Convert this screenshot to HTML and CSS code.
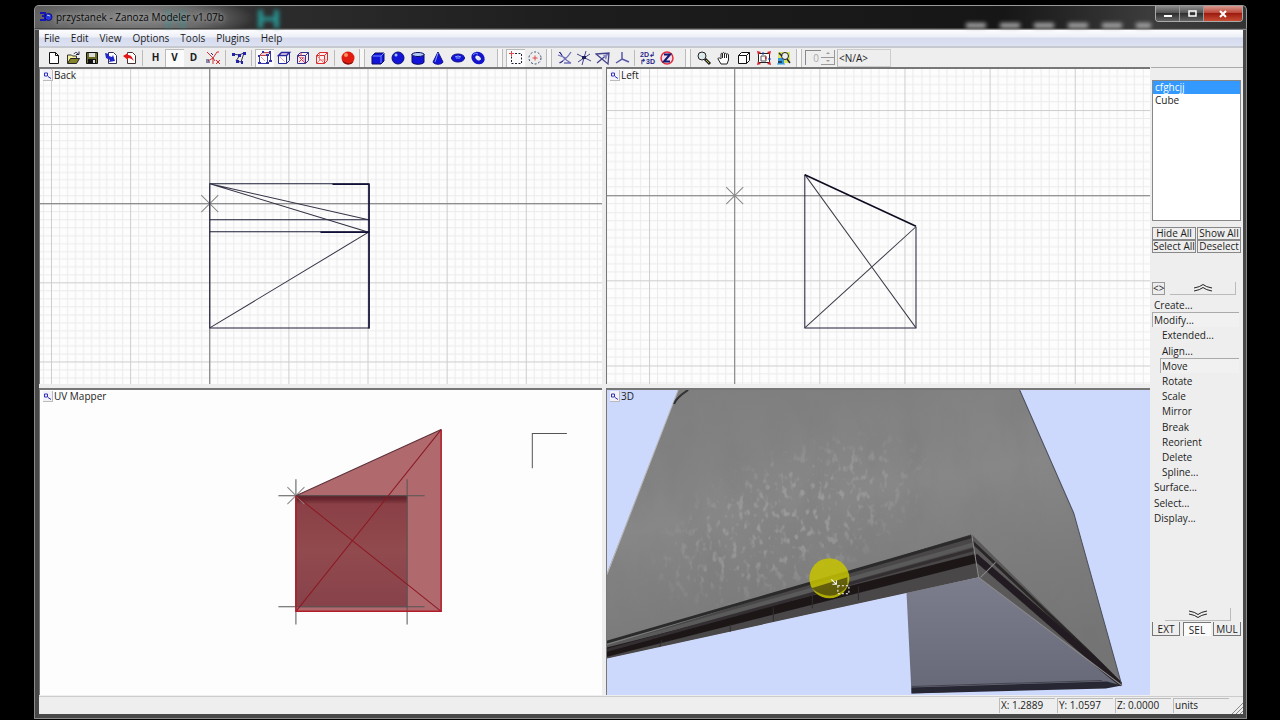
FILE: index.html
```html
<!DOCTYPE html>
<html lang="en">
<head>
<meta charset="utf-8">
<title>przystanek - Zanoza Modeler v1.07b</title>
<link rel="stylesheet" href="styles.css">
</head>
<body>
<svg class="defs" width="0" height="0" aria-hidden="true">
  <symbol id="new" viewBox="0 0 16 16"><path d="M3.500 2.500h6l3 3v8h-9z" fill="#fff" stroke="#111"/><path d="M9.500 2.500v3h3" fill="none" stroke="#111"/></symbol>
  <symbol id="open" viewBox="0 0 16 16"><path d="M2.500 13V5h4l1 1h4v3" fill="#f4ef9c" stroke="#333"/><path d="M2.500 13.500l3-5h9l-3 5z" fill="#84822a" stroke="#222"/><path d="M9 4c1-2 3-2 4 0M11 4.500h3V1.500" fill="none" stroke="#224"/></symbol>
  <symbol id="save" viewBox="0 0 16 16"><path d="M2.500 2.500h11v11h-11z" fill="#6c6c26" stroke="#111"/><path d="M5 3h6v4H5z" fill="#ddd"/><path d="M4 9h8v5H4z" fill="#111"/><path d="M9 10h2v3H9z" fill="#ddd"/></symbol>
  <symbol id="import" viewBox="0 0 16 16"><path d="M5.500 2.500h5l3 3v8h-8z" fill="#fff" stroke="#335"/><path d="M2 3l4 1v2l3 1 1-2 2 6-6 1 1-2-4-2z" fill="#2026c8"/></symbol>
  <symbol id="export" viewBox="0 0 16 16"><path d="M5.500 2.500h5l3 3v8h-8z" fill="#fff" stroke="#433"/><path d="M1 6l5-3v2c3 0 4 2 6 6-2-2-4-3-6-3v2z" fill="#e01818"/></symbol>
  <symbol id="axes" viewBox="0 0 16 16"><path d="M2 2l6 6 4-6M8 8v6M3 11l5-3 2 3" fill="none" stroke="#c33"/><path d="M2 2l2 2M12 2h2M11 10l4 4M15 10l-4 4" stroke="#e22"/><path d="M1 10h3M1 12h4M6 3l2 2" stroke="#226"/></symbol>
  <symbol id="poly" viewBox="0 0 16 16"><path d="M2 4l6 1 5-2-3 9-5-1 4-6" fill="none" stroke="#334"/><path d="M1 3h3v3H1zM7 4h3v3H7zM12 2h3v3h-3zM5 10h3v3H5zM10 11h2v3h-2z" fill="#2222b0"/></symbol>
  <symbol id="cube-v" viewBox="0 0 16 16"><path d="M2.500 5.500h8v8h-8z" fill="#fff" stroke="#3838a8"/><path d="M2.500 5.500l3-3h8l-3 3z" fill="#f4d0d0" stroke="#c04848"/><path d="M13.500 2.500v8l-3 3" fill="none" stroke="#3838a8"/><path d="M4 7l4 4" stroke="#d8a0a8"/><path d="M1 5h2v2H1zM9 4h3v2H9zM12 1h2v3h-2zM5 1h2v2H5zM9 12h3v2H9zM1 12h3v2H1zM12 10h3v2h-3z" fill="#3030a8"/></symbol>
  <symbol id="cube-e" viewBox="0 0 16 16"><path d="M2.500 5.500h8v8h-8z" fill="#fff" stroke="#2828a0"/><path d="M13.500 2.500v8l-3 3" fill="none" stroke="#2828a0"/><path d="M2.500 5.500l3-3h8l-3 3z" fill="#f6dce4" stroke="#2828a0" stroke-width="1.500"/><path d="M4 7l5 5" fill="none" stroke="#e6a0a8"/></symbol>
  <symbol id="cube-f" viewBox="0 0 16 16"><path d="M2.500 5.500h8v8h-8zM2.500 5.500l3-3h8l-3 3M13.500 2.500v8l-3 3" fill="#fbe8ee" stroke="#303090"/><path d="M3 6l7 7M9 7l-5 5M6 3v3" fill="none" stroke="#d03c4c"/><path d="M4 7.500h5v4.500" fill="none" stroke="#e08090"/></symbol>
  <symbol id="cube-o" viewBox="0 0 16 16"><path d="M2.500 5.500h8v8h-8zM2.500 5.500l3-3h8l-3 3M13.500 2.500v8l-3 3" fill="#fff0ee" stroke="#d83030"/><path d="M3 6l7 7M5.500 3v7h7M3 13l3-3" fill="none" stroke="#e88080"/></symbol>
  <symbol id="ball" viewBox="0 0 16 16"><circle cx="8" cy="8" r="6.500" fill="#e01c10"/><path d="M2 10a6.500 6.500 0 0 0 12 1c-3 3-8 3-12-1" fill="#801008"/><circle cx="6" cy="5" r="2" fill="#ff9060"/></symbol>
  <symbol id="box" viewBox="0 0 16 16"><path d="M2 6l3-3h9v8l-3 3H2z" fill="#1414d8" stroke="#0c0c60"/><path d="M2.500 6h8.500l3-3M11 6v7" fill="none" stroke="#7090ff"/></symbol>
  <symbol id="sphere" viewBox="0 0 16 16"><circle cx="8" cy="8" r="6" fill="#1414d8" stroke="#0c0c70"/><circle cx="6" cy="5" r="1.500" fill="#9fc0ff"/></symbol>
  <symbol id="cyl" viewBox="0 0 16 16"><path d="M2 4v8c0 3 12 3 12 0V4z" fill="#1414d8" stroke="#0c0c60"/><ellipse cx="8" cy="4.500" rx="6" ry="2" fill="#b4ccf4" stroke="#0c0c60"/></symbol>
  <symbol id="cone" viewBox="0 0 16 16"><path d="M8 2l5 10c-1 3-9 3-10 0z" fill="#1414d8" stroke="#14148a"/><path d="M8 3l-3 9" stroke="#7898ff"/></symbol>
  <symbol id="torus" viewBox="0 0 16 16"><ellipse cx="8" cy="8" rx="6.500" ry="4" fill="#1414d8" stroke="#0c0c80"/><path d="M5 7q3-2 6 0M6 8h4" fill="none" stroke="#8aa8ff"/></symbol>
  <symbol id="ring" viewBox="0 0 16 16"><ellipse cx="8" cy="8" rx="5" ry="4" transform="rotate(35 8 8)" fill="none" stroke="#1414c8" stroke-width="4"/><ellipse cx="9" cy="9" rx="2" ry="1" fill="#dce4ff"/><path d="M3 5q2-3 5-1" fill="none" stroke="#7090ff"/></symbol>
  <symbol id="selrect" viewBox="0 0 16 16"><path d="M3.500 3.500h10v10h-10z" fill="none" stroke="#223" stroke-dasharray="2 1.500"/><path d="M1 3.500h5M3.500 1v5" stroke="#e04848"/></symbol>
  <symbol id="selcirc" viewBox="0 0 16 16"><circle cx="8" cy="8" r="6" fill="none" stroke="#346" stroke-dasharray="2 1.800"/><path d="M5.500 8h5M8 5.500v5" stroke="#e04848"/></symbol>
  <symbol id="snap1" viewBox="0 0 16 16"><path d="M3 2q3 7 11 11M14 2Q9 10 2 13M1 5l8 3M7 13h7" fill="none" stroke="#7070b8" stroke-width="1.300"/><path d="M2 2l3 3M3 13l3-2" stroke="#222270"/></symbol>
  <symbol id="snap2" viewBox="0 0 16 16"><path d="M1 4l14 7M10 1L6 15M14 4L2 12" fill="none" stroke="#44448c"/><path d="M6 6h4v3H6z" fill="#1d1d58"/></symbol>
  <symbol id="snap3" viewBox="0 0 16 16"><path d="M1 4l13-1-1 11zM2 13L14 3" fill="none" stroke="#44448c" stroke-width="1.300"/><path d="M8 5l3 5 2-6z" fill="#8888c8"/></symbol>
  <symbol id="snap4" viewBox="0 0 16 16"><path d="M8 2v7L2 13M8 9l7 3" fill="none" stroke="#5858a8" stroke-width="1.500"/></symbol>
  <symbol id="zcirc" viewBox="0 0 16 16"><circle cx="8" cy="8" r="6" fill="#f2dceb" stroke="#e42c3c" stroke-width="1.500"/><path d="M5 4.500h6l-6 7h6" fill="none" stroke="#111870" stroke-width="2"/></symbol>
  <symbol id="lens" viewBox="0 0 16 16"><circle cx="6" cy="6" r="4" fill="#dce9e9" stroke="#222"/><path d="M9 9l5 5" stroke="#222" stroke-width="3"/><path d="M10 10l3 3" stroke="#b8b030"/></symbol>
  <symbol id="hand" viewBox="0 0 16 16"><path d="M5 14l-3-5c0-2 2-1 3 0V4c0-1 1.500-1 1.500 0 0-2 2-2 2 0 0-1 2-1 2 .500 0-1 2-1 2 .500v5L11 14z" fill="#fff" stroke="#222"/><path d="M6.500 4v4M8.500 4v4M10.500 4.500V8" stroke="#222"/></symbol>
  <symbol id="cube" viewBox="0 0 16 16"><path d="M2.500 5.500l3-3h8v8l-3 3h-8zM2.500 5.500h8v8M10.500 5.500l3-3" fill="#fff" stroke="#111"/></symbol>
  <symbol id="fit" viewBox="0 0 16 16"><path d="M2.500 3.500h11v9h-11z" fill="#fff" stroke="#222"/><path d="M5 6h5v5H5z" fill="none" stroke="#555"/><path d="M1 1l4 1-3 3zM15 1l-4 1 3 3zM1 15l4-1-3-3zM15 15l-4-1 3-3zM9 6l2 2-2 2z" fill="#d8202c"/><path d="M7 2v3M12 9h3" stroke="#2040c0"/></symbol>
  <symbol id="fitsel" viewBox="0 0 16 16"><path d="M2 2h12v11H2z" fill="#d8e464"/><path d="M2 8h6v6H2z" fill="#3398d8"/><circle cx="9" cy="6" r="3.500" fill="#eee" stroke="#222"/><path d="M11 9l3 4M3 3l3 3M2 12h4" stroke="#223" stroke-width="1.500"/><path d="M1 14h8" stroke="#3298e0"/></symbol>
  <symbol id="mini" viewBox="0 0 9 9"><path d="M1.500 2.500h3v3h-3zM5 6l3 2" fill="none" stroke="#3030b8"/></symbol>
  <symbol id="up" viewBox="0 0 20 8"><path d="M1 4q6-1 9-3.500Q13 3 19 4M1 7q6-1 9-3.500Q13 6 19 7" fill="none" stroke="#222"/></symbol>
</svg>

<div class="window">
  <header class="title">
    <svg class="ghosts" viewBox="0 0 160 22" aria-hidden="true"><path d="M3 2h5v7h9V2h5v18h-5v-7H8v7H3z" fill="#3a8a88" opacity=".6" transform="translate(1 0)"/><path d="M96 2h5v7h11V2h5v18h-5v-7h-11v7h-5z" fill="#2a9090"/></svg>
    <svg class="appicon" viewBox="0 0 14 12" aria-hidden="true"><path d="M1 2h5v3H3h3v4H1" fill="none" stroke="#1616b8" stroke-width="2"/><circle cx="9.500" cy="6" r="3.500" fill="#2638dc" stroke="#0c0c80"/><path d="M8 4l3 1" stroke="#bcd"/></svg>
    <h1>przystanek - Zanoza Modeler v1.07b</h1>
    <i class="smudges"></i>
    <div class="caption">
      <button aria-label="Minimize"><svg viewBox="0 0 12 10"><path d="M2 6h8v2H2z" fill="#fff"/></svg></button>
      <button aria-label="Maximize"><svg viewBox="0 0 12 10"><path d="M3 2h7v5H3z" fill="none" stroke="#fff" stroke-width="1.500"/></svg></button>
      <button class="close" aria-label="Close"><svg viewBox="0 0 12 10"><path d="M3 2l6 6M9 2L3 8" stroke="#fff" stroke-width="2"/></svg></button>
    </div>
  </header>

  <div class="client">
    <nav class="menu">
      <button>File</button><button>Edit</button><button>View</button><button>Options</button><button>Tools</button><button>Plugins</button><button>Help</button>
    </nav>

    <div class="toolbar" role="toolbar">
      <div class="group"><button aria-label="New"><svg><use href="#new"/></svg></button><button aria-label="Open"><svg><use href="#open"/></svg></button><button aria-label="Save"><svg><use href="#save"/></svg></button><button aria-label="Import"><svg><use href="#import"/></svg></button><button aria-label="Export"><svg><use href="#export"/></svg></button></div>
      <i class="sep"></i>
      <div class="group letters"><button>H</button><button class="on">V</button><button>D</button><button aria-label="Axes"><svg><use href="#axes"/></svg></button></div>
      <i class="sep"></i>
      <div class="group"><button aria-label="Polygon"><svg><use href="#poly"/></svg></button></div>
      <i class="sep"></i>
      <div class="group"><button class="on" aria-label="Vertices"><svg><use href="#cube-v"/></svg></button><button aria-label="Edges"><svg><use href="#cube-e"/></svg></button><button aria-label="Faces"><svg><use href="#cube-f"/></svg></button><button aria-label="Objects"><svg><use href="#cube-o"/></svg></button></div>
      <i class="sep"></i>
      <div class="group"><button aria-label="Materials"><svg><use href="#ball"/></svg></button></div>
      <i class="grip"></i>
      <div class="group wide"><button aria-label="Box"><svg><use href="#box"/></svg></button><button aria-label="Sphere"><svg><use href="#sphere"/></svg></button><button aria-label="Cylinder"><svg><use href="#cyl"/></svg></button><button aria-label="Cone"><svg><use href="#cone"/></svg></button><button aria-label="Torus"><svg><use href="#torus"/></svg></button><button aria-label="Ring"><svg><use href="#ring"/></svg></button></div>
      <i class="grip far"></i>
      <div class="group"><button class="on" aria-label="Rectangle select"><svg><use href="#selrect"/></svg></button><button aria-label="Circle select"><svg><use href="#selcirc"/></svg></button></div>
      <i class="grip"></i>
      <div class="group"><button aria-label="Snap to grid"><svg><use href="#snap1"/></svg></button><button aria-label="Snap to vertex"><svg><use href="#snap2"/></svg></button><button aria-label="Snap to face"><svg><use href="#snap3"/></svg></button><button aria-label="Snap to axis"><svg><use href="#snap4"/></svg></button></div>
      <i class="sep"></i>
      <div class="group"><button class="dims"><span>2D&#8626;</span><span>&#8625;3D</span></button><button aria-label="Z-buffer"><svg><use href="#zcirc"/></svg></button></div>
      <i class="grip far"></i>
      <div class="group wide"><button aria-label="Zoom"><svg><use href="#lens"/></svg></button><button aria-label="Pan"><svg><use href="#hand"/></svg></button><button aria-label="Perspective"><svg><use href="#cube"/></svg></button><button aria-label="Fit all"><svg><use href="#fit"/></svg></button><button aria-label="Fit selected"><svg><use href="#fitsel"/></svg></button></div>
      <i class="grip"></i>
      <div class="spin"><input type="text" value="0" aria-label="Index" disabled><div><button aria-label="Increase"><svg viewBox="0 0 8 4"><path d="M2 3l2-2 2 2z" fill="#999"/></svg></button><button aria-label="Decrease"><svg viewBox="0 0 8 4"><path d="M2 1l2 2 2-2z" fill="#999"/></svg></button></div></div>
      <output class="na">&lt;N/A&gt;</output>
    </div>

    <div class="work">
      <main class="views">
        <section class="view">
          <h2><svg><use href="#mini"/></svg>Back</h2>
          <svg class="scene" viewBox="40 69 562 314" preserveAspectRatio="xMinYMin slice">
            <defs><pattern id="g1" x="209" y="203" width="79" height="79" patternUnits="userSpaceOnUse"><path d="M8.500 0v79M16.500 0v79M24.500 0v79M32.500 0v79M40.500 0v79M48.500 0v79M55.500 0v79M63.500 0v79M71.500 0v79M0 8.500h79M0 16.500h79M0 24.500h79M0 32.500h79M0 40.500h79M0 48.500h79M0 55.500h79M0 63.500h79M0 71.500h79" stroke="#ebebeb"/><path d="M.500 0v79M0 .500h79" stroke="#cdcdcd"/></pattern></defs>
            <path d="M40 69h562v318H40z" fill="url(#g1)"/>
            <path d="M40 203.500h562M209.500 69v318" stroke="#777"/>
            <path d="M201 195l17 17M218 195l-17 17" stroke="#888"/>
            <g fill="none" stroke="#1c1c38"><path d="M209.500 183.500h159v144h-159zM209.500 219.500h159M209.500 231.500h159"/><path d="M209.500 183.500L368 219.500M209.500 183.500L368 232L209.500 327.500" stroke="#333346"/><path d="M332 184h37M368.500 184v144M320 232h49" stroke="#101038" stroke-width="1.500"/></g>
          </svg>
        </section>
        <section class="view">
          <h2><svg><use href="#mini"/></svg>Left</h2>
          <svg class="scene" viewBox="607 69 543 314" preserveAspectRatio="xMinYMin slice">
            <defs><pattern id="g2" x="734" y="195" width="85" height="85" patternUnits="userSpaceOnUse"><path d="M8.500 0v85M17.500 0v85M25.500 0v85M34.500 0v85M42.500 0v85M51.500 0v85M59.500 0v85M68.500 0v85M76.500 0v85M0 8.500h85M0 17.500h85M0 25.500h85M0 34.500h85M0 42.500h85M0 51.500h85M0 59.500h85M0 68.500h85M0 76.500h85" stroke="#ebebeb"/><path d="M.500 0v85M0 .500h85" stroke="#cdcdcd"/></pattern></defs>
            <path d="M607 69h543v318H607z" fill="url(#g2)"/>
            <path d="M607 195.500h543M734.500 69v318" stroke="#808080"/>
            <path d="M726 187l17 17M743 187l-17 17" stroke="#888"/>
            <g fill="none" stroke="#1c1c38"><path d="M804.500 174.500v153h111v-101"/><path d="M804.500 174.500l111 153M804.500 327.500l111-101" stroke="#3c3c48"/><path d="M804.500 174.500l111 51.500" stroke="#0c0c20" stroke-width="1.600"/></g>
          </svg>
        </section>
        <section class="view">
          <h2><svg><use href="#mini"/></svg>UV Mapper</h2>
          <svg class="scene" viewBox="40 390 562 305" preserveAspectRatio="xMinYMin slice">
            <defs><linearGradient id="uv" x1="0" y1="0" x2="0" y2="1"><stop offset="0" stop-color="#5c1c24"/><stop offset=".04" stop-color="#6c2830"/><stop offset=".08" stop-color="#8a4046"/><stop offset=".5" stop-color="#914a4e"/><stop offset="1" stop-color="#87424a"/></linearGradient></defs>
            <path d="M295.500 495.500L440.500 429.500v181.500h-145z" fill="#b06a6e"/>
            <path d="M295 495h112v112H295z" fill="url(#uv)"/>
            <path d="M278 495.500h146M278 606.500h146M295.500 479v145M406.500 479v145M531.500 468v-34.500H566" fill="none" stroke="#555"/>
            <path d="M287 487l17 17M304 487l-17 17" stroke="#8a8a8a"/>
            <path d="M440.500 429.500L295.500 611M295.500 495.500L440.500 611" stroke="#8c1822"/>
            <path d="M295.500 495.500v115.500h145V429.500" fill="none" stroke="#b01c28" stroke-width="1.500"/>
            <path d="M295.500 495.500l145-66" stroke="#5c3038"/>
          </svg>
        </section>
        <section class="view sky">
          <h2><svg><use href="#mini"/></svg>3D</h2>
          <svg class="scene" viewBox="607 390 543 305" preserveAspectRatio="xMinYMin slice">
            <defs>
              <linearGradient id="wall" x1="0" y1="0" x2=".3" y2="1"><stop offset="0" stop-color="#7e7e7e"/><stop offset=".45" stop-color="#878787"/><stop offset=".75" stop-color="#7c7c7c"/><stop offset="1" stop-color="#747474"/></linearGradient>
              <linearGradient id="back" x1="0" y1="0" x2="0" y2="1"><stop offset="0" stop-color="#7c7e8e"/><stop offset="1" stop-color="#666877"/></linearGradient>
              <radialGradient id="fade"><stop offset="0" stop-color="#fff"/><stop offset=".6" stop-color="#aaa"/><stop offset="1" stop-color="#000"/></radialGradient>
              <mask id="patch"><ellipse cx="790" cy="520" rx="160" ry="75" transform="rotate(-25 790 520)" fill="url(#fade)"/></mask>
              <filter id="grain" x="0" y="0" width="100%" height="100%"><feTurbulence type="fractalNoise" baseFrequency=".03 .014" numOctaves="4" seed="7"/><feColorMatrix values="0 0 0 0 .2  0 0 0 0 .2  0 0 0 0 .2  2.500 0 0 0 -1"/><feComposite in2="SourceGraphic" operator="in"/></filter>
              <filter id="chips" x="0" y="0" width="100%" height="100%"><feTurbulence type="fractalNoise" baseFrequency=".16 .11" numOctaves="2" seed="3"/><feColorMatrix values="0 0 0 0 .66  0 0 0 0 .66  0 0 0 0 .66  5 0 0 0 -2.700"/><feComposite in2="SourceGraphic" operator="in"/></filter>
              <filter id="soft"><feGaussianBlur stdDeviation=".7"/></filter>
              <clipPath id="under"><path d="M607 636L971 532L978 577L607 658z"/></clipPath>
              <clipPath id="side"><path d="M971 532L1121 682V687L978 577z"/></clipPath>
            </defs>
            <path d="M906 592l72-15 143 108-210 8z" fill="url(#back)"/>
            <path d="M911 687l195-6 15 4-16 3-194 5z" fill="#272733"/>
            <path d="M911 686l190-6" stroke="#44444f"/>
            <path d="M678 390h341l47 107 7 16 48 172-143-108-371 81v-85z" fill="url(#wall)"/>
            <path d="M678 390h341l47 107 7 16 48 172-143-108-371 81v-85z" filter="url(#grain)" opacity=".4"/>
            <g mask="url(#patch)"><path d="M678 390h293v144l-364 106v-66z" filter="url(#chips)" opacity=".3"/></g>
            <g clip-path="url(#under)"><path d="M607 645L971 534l7 43-371 81z" fill="#494748"/><g fill="none" filter="url(#soft)"><path d="M606 642L972 536" stroke="#2c2a2b" stroke-width="3"/><path d="M606 647L974 544" stroke="#5a5a5a" stroke-width="4"/><path d="M606 652L976 558" stroke="#1c1819" stroke-width="9"/><path d="M606 650L974 549" stroke="#332e30" stroke-width="3"/></g><path d="M662 640l-4 10M730 624v13M773 607v14M812 592v16M858 586v14" stroke="#302d30"/></g>
            <g clip-path="url(#side)"><path d="M971 534l150 148v3L978 577z" fill="#5a5858"/><g fill="none" filter="url(#soft)"><path d="M972 542L1121 682" stroke="#292627" stroke-width="3"/><path d="M974 556L1121 684" stroke="#221f20" stroke-width="7"/></g></g>
            <path d="M1019 390l47 107 7 16 48 172" fill="none" stroke="#4b4f5b"/>
            <path d="M678 390l-71 184" stroke="#bbb"/>
            <path d="M674 404c2-6 8-10 14-14" fill="none" stroke="#333" stroke-width="2"/>
            <path d="M971 534l7 43 143 108M980 577l15-15" fill="none" stroke="#888"/>
            <circle cx="829" cy="578" r="20" fill="#c6c400" opacity=".86"/><path d="M811 588l36-11v9q-15 18-36 2" fill="#35310c" opacity=".65"/>
            <path d="M831 579l5 5M836 580v4h-4" stroke="#fff" fill="none"/><path d="M837.500 585.500h11v8h-11z" fill="none" stroke="#fff" stroke-dasharray="2 2"/>
          </svg>
        </section>
      </main>

      <aside class="side">
        <ul class="list" role="listbox" aria-label="Objects"><li role="option" aria-selected="true">cfghcjj</li><li role="option">Cube</li></ul>
        <div class="pairs"><button>Hide All</button><button>Show All</button><button>Select All</button><button>Deselect</button></div>
        <div class="scroll"><button class="code">&lt;&gt;</button><button class="chev" aria-label="Scroll up"><svg><use href="#up"/></svg></button></div>
        <div class="tree"><button>Create...</button><button class="on">Modify...</button><button class="sub">Extended...</button><button class="sub">Align...</button><button class="sub on">Move</button><button class="sub">Rotate</button><button class="sub">Scale</button><button class="sub">Mirror</button><button class="sub">Break</button><button class="sub">Reorient</button><button class="sub">Delete</button><button class="sub">Spline...</button><button>Surface...</button><button>Select...</button><button>Display...</button></div>
        <button class="chev down" aria-label="Scroll down"><svg><use href="#up"/></svg></button>
        <div class="modes"><button>EXT</button><button class="on">SEL</button><button>MUL</button></div>
      </aside>
    </div>

    <footer class="status"><span>X: 1.2889</span><span>Y: 1.0597</span><span>Z: 0.0000</span><span>units</span><svg viewBox="0 0 12 12"><path d="M1 12L12 1M5 12l7-7M9 12l3-3" stroke="#888"/></svg></footer>
  </div>
</div>
</body>
</html>
```

FILE: styles.css
```css
* { box-sizing: border-box; }
body { margin: 0; background: #000; color: #1c1c1c; font: 10px/15px "Open Sans", "Noto Sans", sans-serif; }
button { font: inherit; color: inherit; padding: 0; margin: 0; border: 0; background: none; }
h1, h2, ul { margin: 0; padding: 0; font-size: inherit; font-weight: 400; list-style: none; }
.defs { position: absolute; }

.window {
  display: flex; flex-direction: column; height: 100vh;
  border-style: solid; border-color: #000; border-width: 5px 33px 1px 34px;
}
.title {
  position: relative; display: flex; align-items: center; height: 24px; flex: none;
  padding-left: 4px; border: 1px solid #999; border-bottom-color: #444; border-radius: 5px 5px 0 0;
  background: radial-gradient(ellipse 125px 24px at 95px 12px, #868686, #6c6c6c 60%, transparent), linear-gradient(90deg, #555, #2c2c2c 20%, #1d1d1d 45%, #161616 80%, #3c3c3c 92%, #333);
}
.appicon { position: relative; width: 14px; height: 12px; }
.title h1 { position: relative; margin-left: 3px; color: #080808; text-shadow: 0 0 6px #aaa, 0 0 4px #999; }
.ghosts { position: absolute; left: 127px; top: 2px; width: 160px; height: 22px; filter: blur(2px); }
.smudges { position: absolute; right: 95px; bottom: 0; width: 185px; height: 5px; filter: blur(2px); background: repeating-linear-gradient(90deg, #aaa 0 20px, transparent 20px 34px); }
.caption { position: relative; display: flex; align-self: flex-start; margin-left: auto; margin-right: 3px; border: 1px solid #aaa; border-top: 0; border-radius: 0 0 4px 4px; overflow: hidden; }
.caption button { width: 24px; height: 15px; border-right: 1px solid #999; background: linear-gradient(#8c8c8c, #555 45%, #2f2f2f 50%, #656565); }
.caption .close { width: 38px; border: 0; background: linear-gradient(#d99a90, #bd4a3c 45%, #9c1c10 50%, #c84c34); }
.caption svg { width: 12px; height: 10px; display: block; margin: auto; }

.client {
  flex: 1; min-height: 0; display: flex; flex-direction: column; background: #eee;
  border-style: solid; border-color: #484848; border-width: 0 4px 5px 5px;
  outline: 1px solid #8a8a8a; outline-offset: -1px;
}
.menu { display: flex; gap: 11px; height: 17px; padding-left: 5px; background: linear-gradient(#fff, #eef0f8 45%, #d6dcee 55%, #dde2f2); }
.menu button { line-height: 18px; }
.toolbar { display: flex; align-items: center; height: 21px; padding-left: 5px; border-top: 2px solid #c6cad0; background: #eee; flex: none; }
.group { display: flex; }
.group button { width: 19px; height: 18px; display: grid; place-items: center; }
.group.wide button { width: 20px; }
.group svg { width: 16px; height: 16px; }
.group .on { background: #fbfbfb; box-shadow: inset 1px 1px #bbb; }
.letters button { font-weight: 700; }
.group .dims { font: 700 7px/7px "Liberation Sans", sans-serif; color: #28288a; align-content: center; }
.sep { width: 1px; height: 16px; margin: 0 3px; background: #bbb; }
.grip { width: 6px; height: 18px; margin: 0 3px 0 2px; border: solid #bbb; border-width: 0 1px; background: #f7f7f7; }
.grip.far { margin: 0 3px 0 9px; }
.spin { display: flex; width: 30px; height: 15px; }
.spin input { width: 16px; padding: 0 2px 0 0; border: solid #888; border-width: 1px 0 0 1px; background: #eee; color: #aaa; font: inherit; text-align: right; }
.spin div { width: 14px; display: grid; grid-template-rows: 1fr 1fr; }
.spin button { border: solid #999; border-width: 0 1px 1px 0; line-height: 0; }
.spin svg { width: 8px; height: 4px; }
.na { width: 54px; height: 18px; margin-left: 2px; padding-left: 1px; border: 1px solid #ccc; border-left-color: #bbb; line-height: 17px; }

.work { flex: 1; min-height: 0; display: flex; }
.views { flex: 1; min-width: 0; display: grid; grid-template-columns: 563fr 544fr; grid-template-rows: 316fr 307fr; gap: 4px; padding: 0 1px 1px 0; }
.view { position: relative; overflow: hidden; min-width: 0; min-height: 0; background: #fdfdfd; border: solid #777; border-width: 2px 0 0 1px; }
.sky { background: #ccd8fc; }
.scene { display: block; width: 100%; height: 100%; }
.view h2 { position: absolute; left: 3px; top: 0; display: flex; align-items: center; gap: 1px; line-height: 13px; }
.view h2 svg { width: 10px; height: 11px; background: #f2f2f8; border: solid #bbb; border-width: 0 1px 1px 0; }

.side { width: 92px; flex: none; display: flex; flex-direction: column; padding: 12px 2px 60px 1px; border-top: 1px solid #aaa; }
.list { height: 141px; flex: none; border: 1px solid #888; background: #fff; line-height: 13px; }
.list li { padding-left: 2px; }
.list [aria-selected=true] { background: #3399ff; color: #fff; }
.pairs { display: grid; grid-template-columns: 1fr 1fr; margin-top: 6px; gap: 0 1px; }
.pairs button { height: 13px; line-height: 11px; white-space: nowrap; border: 1px solid #888; }
.scroll { display: flex; gap: 5px; margin-top: 29px; padding-right: 5px; }
.code { width: 13px; height: 13px; line-height: 11px; border: 1px solid #999; display: grid; place-items: center; }
.chev { flex: 1; height: 13px; border: solid #bbb; border-width: 0 1px 1px 0; }
.chev svg { display: block; width: 20px; height: 8px; margin: auto; }
.tree { display: grid; grid-auto-rows: 1fr; min-height: 228px; margin-top: 2px; padding-right: 2px; }
.tree button { text-align: left; padding-left: 1px; line-height: 14px; border: 1px solid transparent; border-width: 1px 0 0 1px; }
.tree .sub { margin-left: 8px; }
.tree .on { border-color: #aaa; background: #f1f1f1; }
.down { flex: none; margin: auto 10px 1px 13px; }
.down svg { transform: rotate(180deg); }
.modes { display: flex; justify-content: space-between; }
.modes button { width: 28px; height: 14px; line-height: 12px; border: 1px solid #777; border-width: 0 1px 1px 1px; }
.modes .on { border-width: 1px 0 0 1px; background: #fbfbfb; }

.status { display: flex; justify-content: flex-end; align-items: center; gap: 2px; height: 18px; flex: none; border-top: 1px solid #ccc; }
.status span { width: 56px; height: 15px; line-height: 13px; padding-left: 1px; border: solid #bbb; border-width: 1px 0 0 1px; }
.status svg { width: 12px; height: 12px; align-self: flex-end; }
```
